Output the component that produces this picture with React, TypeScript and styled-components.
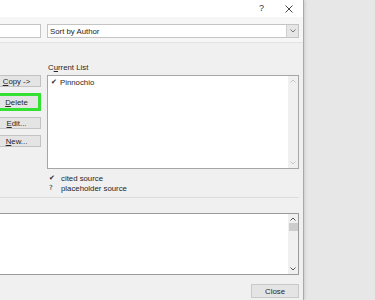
import React from 'react';
import styled, { createGlobalStyle } from 'styled-components';

const GlobalStyle = createGlobalStyle`
  html, body {
    margin: 0;
    padding: 0;
  }
  body {
    font-family: 'Liberation Sans', Arial, sans-serif;
    font-size: 7.8px;
    color: #262626;
  }
`;

const Page = styled.div`
  width: 375px;
  height: 300px;
  overflow: hidden;
  display: flex;
  background: #e7e7e7;
`;

const Dialog = styled.div`
  box-sizing: border-box;
  width: 314px;
  height: 300px;
  margin-left: -10px;
  flex-shrink: 0;
  display: flex;
  flex-direction: column;
  background: #f0f0f0;
  border-right: 1px solid #a9a9a9;
  box-shadow: 1px 0 3px rgba(0, 0, 0, 0.12);
`;

const TitleBar = styled.div`
  height: 17px;
  background: #ffffff;
  display: flex;
  align-items: center;
  justify-content: flex-end;
  padding-right: 10px;
  gap: 21px;
`;

const HelpGlyph = styled.span`
  font-size: 9px;
  color: #333;
  line-height: 1;
`;

const HeaderBand = styled.div`
  box-sizing: border-box;
  height: 26px;
  background: #f6f6f6;
  border-bottom: 1px solid #e2e2e2;
  display: flex;
  align-items: flex-start;
  padding: 7px 4px 0 0;
`;

const Field = styled.div`
  box-sizing: border-box;
  width: 51px;
  height: 14px;
  background: #fff;
  border: 1px solid #c4c4c4;
`;

const Select = styled.div`
  box-sizing: border-box;
  flex: 1;
  height: 14px;
  margin-left: 6px;
  background: #fff;
  border: 1px solid #c4c4c4;
  display: flex;
  align-items: center;
  padding-left: 2px;
`;

const SelectText = styled.span`
  flex: 1;
`;

const SelectArrow = styled.div`
  width: 11px;
  height: 12px;
  background: #e6e6e6;
  border-left: 1px solid #cfcfcf;
  display: flex;
  align-items: center;
  justify-content: center;
`;

const Main = styled.div`
  display: flex;
  padding-right: 4px;
`;

const LeftCol = styled.div`
  width: 51px;
  padding-top: 32px;
  display: flex;
  flex-direction: column;
  gap: 6px;
`;

const Button = styled.div<{ $highlight?: boolean }>`
  box-sizing: border-box;
  height: ${(p) => (p.$highlight ? '18px' : '12px')};
  background: #e4e4e4;
  border: ${(p) => (p.$highlight ? '3px solid #35e035' : '1px solid #c2c2c2')};
  display: flex;
  align-items: center;
  justify-content: center;
  padding-left: 2px;
`;

const RightCol = styled.div`
  flex: 1;
  margin-left: 6px;
  display: flex;
  flex-direction: column;
`;

const Label = styled.div`
  margin-top: 20px;
  height: 10px;
  line-height: 10px;
  padding-left: 1px;
`;

const ListBox = styled.div<{ $height: number }>`
  box-sizing: border-box;
  height: ${(p) => p.$height}px;
  margin-top: 2px;
  background: #fff;
  border: 1px solid #a6a6a6;
  display: flex;
`;

const ListItems = styled.div`
  flex: 1;
  padding: 1px 3px;
`;

const Item = styled.div`
  display: flex;
  align-items: center;
  height: 10px;
  gap: 3px;
`;

const Check = styled.span`
  font-family: 'DejaVu Sans', sans-serif;
  font-size: 7px;
  width: 6px;
`;

const Scrollbar = styled.div`
  width: 10px;
  background: #f0f0f0;
  display: flex;
  flex-direction: column;
  align-items: center;
  justify-content: space-between;
  padding: 3px 0;
`;

const Thumb = styled.div`
  width: 9px;
  height: 8px;
  background: #cdcdcd;
  margin-top: 2px;
`;

const ScrollSpacer = styled.div`
  flex: 1;
`;

const Legend = styled.div`
  margin-top: 4px;
  display: flex;
  flex-direction: column;
`;

const LegendItem = styled.div`
  height: 10px;
  display: flex;
  align-items: center;
  padding-left: 2px;
`;

const LegendMark = styled.span`
  font-family: 'DejaVu Sans', sans-serif;
  font-size: 7px;
  width: 12px;
`;

const Divider = styled.div`
  margin-top: 4px;
  height: 1px;
  background: #dcdcdc;
  margin-right: 4px;
`;

const Preview = styled(ListBox)`
  margin-top: 15px;
  margin-right: 4px;
  border-color: #9a9a9a;
`;

const Footer = styled.div`
  display: flex;
  justify-content: flex-end;
  padding: 9px 4px 0 0;
`;

const CloseButton = styled.div`
  box-sizing: border-box;
  width: 48px;
  height: 14px;
  background: #e4e4e4;
  border: 1px solid #c9c9c9;
  display: flex;
  align-items: center;
  justify-content: center;
`;

const Chevron = ({ up, color }: { up?: boolean; color: string }) => (
  <svg width="6" height="4" viewBox="0 0 6 4">
    <path d={up ? 'M0.5 3.5 L3 1 L5.5 3.5' : 'M0.5 0.5 L3 3 L5.5 0.5'} fill="none" stroke={color} strokeWidth="1" />
  </svg>
);

const CloseIcon = () => (
  <svg width="8" height="8" viewBox="0 0 8 8">
    <path d="M0.5 0.5 L7.5 7.5 M7.5 0.5 L0.5 7.5" stroke="#333" strokeWidth="0.9" />
  </svg>
);

export default function App() {
  return (
    <>
      <GlobalStyle />
      <Page>
        <Dialog>
          <TitleBar>
            <HelpGlyph>?</HelpGlyph>
            <CloseIcon />
          </TitleBar>
          <HeaderBand>
            <Field />
            <Select>
              <SelectText>Sort by Author</SelectText>
              <SelectArrow>
                <Chevron color="#777" />
              </SelectArrow>
            </Select>
          </HeaderBand>
          <Main>
            <LeftCol>
              <Button>
                <u>C</u>opy -&gt;
              </Button>
              <Button $highlight>
                <u>D</u>elete
              </Button>
              <Button>
                <u>E</u>dit...
              </Button>
              <Button>
                <u>N</u>ew...
              </Button>
            </LeftCol>
            <RightCol>
              <Label>
                C<u>u</u>rrent List
              </Label>
              <ListBox $height={94}>
                <ListItems>
                  <Item>
                    <Check>✔</Check>
                    <span>Pinnochio</span>
                  </Item>
                </ListItems>
                <Scrollbar>
                  <Chevron up color="#c4c4c4" />
                  <Chevron color="#c4c4c4" />
                </Scrollbar>
              </ListBox>
              <Legend>
                <LegendItem>
                  <LegendMark>✔</LegendMark>
                  <span>cited source</span>
                </LegendItem>
                <LegendItem>
                  <LegendMark>?</LegendMark>
                  <span>placeholder source</span>
                </LegendItem>
              </Legend>
            </RightCol>
          </Main>
          <Divider />
          <Preview $height={62}>
            <ListItems />
            <Scrollbar>
              <Chevron up color="#555" />
              <Thumb />
              <ScrollSpacer />
              <Chevron color="#555" />
            </Scrollbar>
          </Preview>
          <Footer>
            <CloseButton>Close</CloseButton>
          </Footer>
        </Dialog>
      </Page>
    </>
  );
}
